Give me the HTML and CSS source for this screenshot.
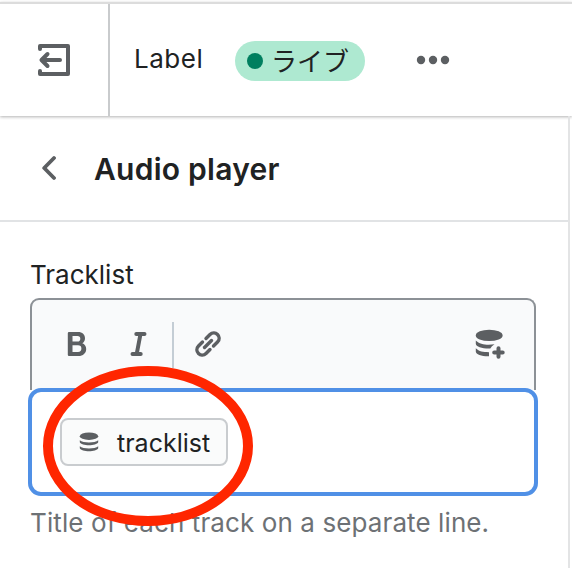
FILE: index.html
```html
<!DOCTYPE html>
<html lang="ja">
  <head>
    <meta charset="utf-8" />
    <title>Audio player</title>
    <link rel="stylesheet" href="styles.css" />
  </head>
  <body>
    <header class="topbar">
      <button type="button" class="exit" aria-label="Exit">
        <svg width="34" height="34" viewBox="0 0 34 34" fill="none" stroke="currentColor" stroke-width="4" stroke-linecap="round" stroke-linejoin="round">
          <path d="M3 6V3H31V31H3V28" />
          <path d="M23 17H5M10.500 11L4.500 17L10.500 23" />
        </svg>
      </button>
      <span class="theme-name">Label</span>
      <span class="badge"><span class="dot"></span><span class="badge-text">ライブ</span></span>
      <button type="button" class="more" aria-label="More">
        <svg width="34" height="10" viewBox="0 0 34 10" fill="currentColor">
          <circle cx="5" cy="5" r="4.200" />
          <circle cx="17" cy="5" r="4.200" />
          <circle cx="29" cy="5" r="4.200" />
        </svg>
      </button>
    </header>

    <main class="panel">
      <div class="panel-header">
        <button type="button" class="back" aria-label="Back">
          <svg width="16" height="26" viewBox="0 0 16 26" fill="none" stroke="currentColor" stroke-width="3.800" stroke-linecap="round" stroke-linejoin="round">
            <path d="M14 3L4.200 13L14 23" />
          </svg>
        </button>
        <h2>Audio player</h2>
      </div>

      <div class="field">
        <div class="label">Tracklist</div>
        <div class="editor">
          <div class="toolbar">
            <svg class="bold" width="22" height="26" viewBox="0 0 22 26" fill="currentColor" fill-rule="evenodd">
              <path d="M3 1H12C16.500 1 19 3.700 19 7.200C19 9.500 17.900 11.300 16.300 12.200C18.700 13 20.200 15.200 20.200 18C20.200 22.300 17 25 12.500 25H3Q1.800 25 1.800 23.800V2.200Q1.800 1 3 1ZM6.500 5V10.500H11.500Q14.300 10.500 14.300 7.700Q14.300 5 11.500 5ZM6.500 14.300V21H12Q15.400 21 15.400 17.600Q15.400 14.300 12 14.300Z" />
            </svg>
            <svg class="italic" width="18" height="26" viewBox="0 0 18 26" fill="none" stroke="currentColor" stroke-width="4" stroke-linecap="round">
              <path d="M6.300 3H14.500M2.500 23H10.700M10.500 3L6.700 23" />
            </svg>
            <span class="divider"></span>
            <svg class="link" width="28" height="28" viewBox="0 0 28 28" fill="none" stroke="currentColor" stroke-width="3.400" stroke-linecap="round">
              <path d="M12 8.500L16 4.500C21-0.500 28.500 7 23.500 12L19.500 16" />
              <path d="M16 19.500L12 23.500C7 28.500-0.500 21 4.500 16L8.500 12" />
              <path d="M10.500 17.500L17.500 10.500" />
            </svg>
            <svg class="source" width="30" height="30" viewBox="0 0 30 30" fill="currentColor">
              <ellipse cx="14.200" cy="6.400" rx="13.400" ry="5.700" />
              <path d="M0.800 11.500C5 16 13 16.300 19.500 15.300Q16.500 17 15.300 19.500C8 19.800 0.800 18 0.800 14.800Z" />
              <path d="M0.800 19.300C4 22.500 8 23.200 14 23.200V27.300C7 27.500 0.800 25.500 0.800 22.500Z" />
              <path d="M23.500 19.300V27.800M19.200 23.600H27.700" fill="none" stroke="currentColor" stroke-width="4" stroke-linecap="round" />
            </svg>
          </div>
          <div class="input">
            <span class="chip">
              <svg width="20" height="20" viewBox="0 0 20 20" fill="currentColor">
                <ellipse cx="10" cy="4.200" rx="9.200" ry="3.700" />
                <path d="M0.800 8.300C4 11.200 16 11.200 19.200 8.300V10.300C17.500 14.300 2.500 14.300 0.800 10.300Z" />
                <path d="M0.800 14.300C4 17.200 16 17.200 19.200 14.300V16.300C17.500 20.300 2.500 20.300 0.800 16.300Z" />
              </svg>
              <span class="chip-text">tracklist</span>
            </span>
          </div>
        </div>
        <div class="help">Title of each track on a separate line.</div>
      </div>
    </main>

    <svg class="highlight" width="212" height="162" viewBox="0 0 212 162">
      <ellipse cx="106" cy="81" rx="100" ry="75" fill="none" stroke="#ff2600" stroke-width="10" />
    </svg>
  </body>
</html>
```

FILE: styles.css
```css
* {
  box-sizing: border-box;
}

body {
  margin: 0;
  height: 568px;
  padding-top: 2px;
  overflow: hidden;
  display: flex;
  flex-direction: column;
  background-color: #ffffff;
  color: #202223;
  font-family: Inter, "Noto Sans CJK JP", sans-serif;
  font-size: 26px;
}

svg {
  display: block;
  flex: none;
}

button {
  background: none;
  border: none;
  padding: 0;
  color: #5c5f62;
}

.topbar {
  flex: none;
  display: flex;
  align-items: center;
  height: 114px;
  border-top: 2px solid #dcdcdc;
  box-shadow: 0 1px 3px rgba(0, 0, 0, 0.3);
}

.exit {
  width: 110px;
  height: 112px;
  padding-left: 37px;
  border-right: 2px solid #c9cbcd;
}

.theme-name {
  width: 125px;
  padding-left: 24px;
  line-height: 32px;
  margin-top: -2px;
  letter-spacing: 0.5px;
}

.badge {
  display: flex;
  align-items: center;
  width: 130px;
  height: 40px;
  margin-top: 2px;
  padding-left: 12px;
  border-radius: 20px;
  background-color: #aee9d1;
}

.badge-text {
  padding-bottom: 3px;
  font-family: "Noto Sans CJK JP", sans-serif;
  font-size: 26px;
  line-height: 37px;
}

.dot {
  width: 16px;
  height: 16px;
  margin-right: 8px;
  border-radius: 50%;
  background-color: #007f5f;
}

.more {
  margin-left: 51px;
}

.panel {
  flex: 1;
  width: 570px;
  border-right: 2px solid #e3e4e5;
}

.panel-header {
  display: flex;
  align-items: center;
  height: 106px;
  padding-left: 40px;
  border-bottom: 2px solid #e1e3e5;
}

.back {
  width: 54px;
}

h2 {
  margin: 2px 0 0;
  font-size: 30px;
  font-weight: 600;
  line-height: 36px;
  letter-spacing: 0.25px;
}

.field {
  padding: 36px 32px 0 30px;
}

.label {
  height: 40px;
  line-height: 34px;
}

.editor {
  width: 506px;
}

.toolbar {
  display: flex;
  align-items: center;
  height: 92px;
  padding: 0 29px 2px 34px;
  border: 2px solid #8c9196;
  border-bottom: none;
  border-radius: 9px 9px 0 0;
  background-color: #f9fafb;
  color: #5c5f62;
}

.italic {
  margin-left: 42px;
}

.divider {
  width: 2px;
  height: 46px;
  margin: 2px 0 0 24px;
  background-color: #c4cdd5;
}

.link {
  margin-left: 20px;
}

.source {
  margin-left: auto;
}

.input {
  width: 510px;
  height: 108px;
  margin: -2px 0 0 -2px;
  padding: 26px 28px;
  border: 4px solid #5090e6;
  border-radius: 13px;
  background-color: #ffffff;
}

.chip {
  display: flex;
  align-items: center;
  gap: 18px;
  width: 168px;
  height: 48px;
  padding-left: 17px;
  border: 2px solid #c9cccf;
  border-radius: 8px;
  background-color: #fafbfb;
  font-size: 25px;
}

.chip svg {
  color: #5c5f62;
}

.chip-text {
  padding-top: 2px;
}

.help {
  margin-top: 10px;
  color: #6d7175;
  line-height: 34px;
  letter-spacing: 0.1px;
  white-space: nowrap;
}

.highlight {
  position: absolute;
  left: 42px;
  top: 365px;
}
```
